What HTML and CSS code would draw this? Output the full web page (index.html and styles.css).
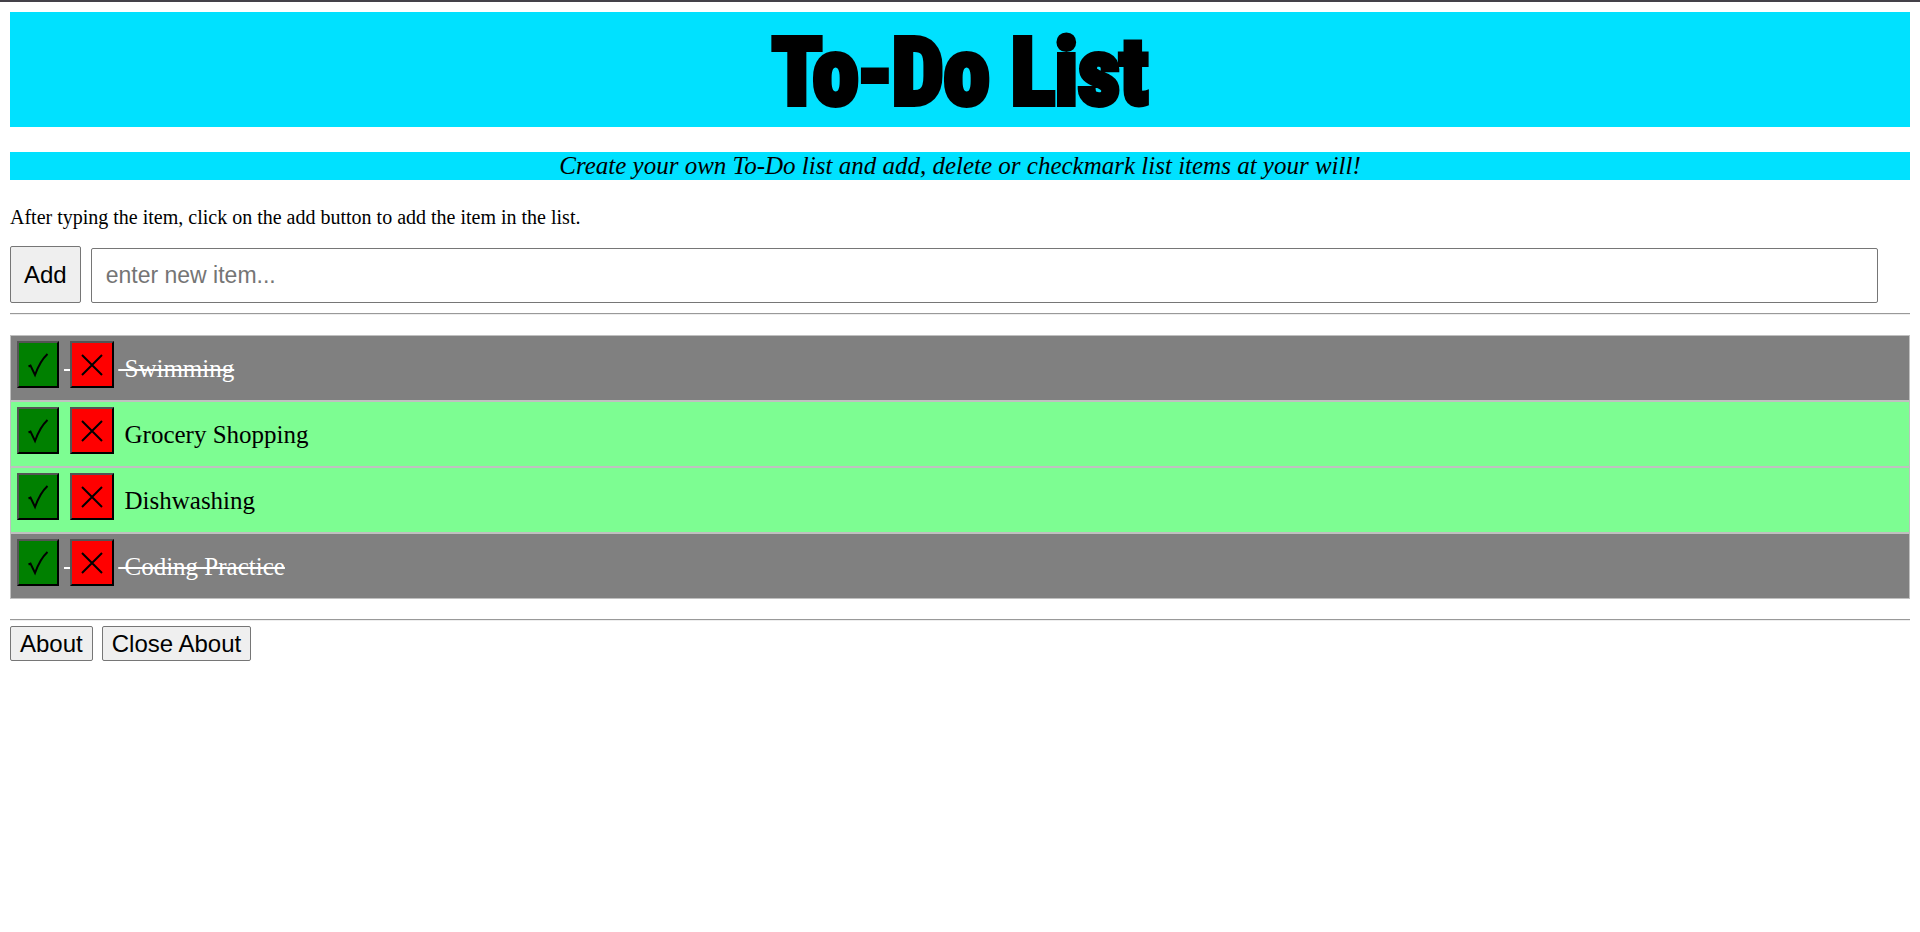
FILE: index.html
```html
<!DOCTYPE html>
<html lang="en">
<head>
<meta charset="utf-8">
<title>To-Do List</title>
<link rel="stylesheet" href="styles.css">
</head>
<body>
<header>
<h1 class="title">To-Do List</h1>
<p class="tagline">Create your own To-Do list and add, delete or checkmark list items at your will!</p>
</header>
<main>
<p class="hint"><label for="item">After typing the item, click on the add button to add the item in the list.</label></p>
<form class="entry">
<button class="add" type="button">Add</button>
<input class="field" id="item" type="text" placeholder="enter new item...">
</form>
<hr class="rule">
<ul class="list">
<li class="item done"><button class="mark check" type="button" aria-label="Check"><svg width="22" height="26" viewBox="0 0 22 26"><path d="M1.500 14.500L3.500 13.500L8 23Q13 9 20.500 2"/></svg></button><span class="gap"> </span><button class="mark remove" type="button" aria-label="Delete"><svg width="22" height="22" viewBox="0 0 22 22"><path d="M1 1L21 21M21 1L1 21"/></svg></button><span class="text"> Swimming</span></li>
<li class="item"><button class="mark check" type="button" aria-label="Check"><svg width="22" height="26" viewBox="0 0 22 26"><path d="M1.500 14.500L3.500 13.500L8 23Q13 9 20.500 2"/></svg></button><span class="gap"> </span><button class="mark remove" type="button" aria-label="Delete"><svg width="22" height="22" viewBox="0 0 22 22"><path d="M1 1L21 21M21 1L1 21"/></svg></button><span class="text"> Grocery Shopping</span></li>
<li class="item"><button class="mark check" type="button" aria-label="Check"><svg width="22" height="26" viewBox="0 0 22 26"><path d="M1.500 14.500L3.500 13.500L8 23Q13 9 20.500 2"/></svg></button><span class="gap"> </span><button class="mark remove" type="button" aria-label="Delete"><svg width="22" height="22" viewBox="0 0 22 22"><path d="M1 1L21 21M21 1L1 21"/></svg></button><span class="text"> Dishwashing</span></li>
<li class="item done"><button class="mark check" type="button" aria-label="Check"><svg width="22" height="26" viewBox="0 0 22 26"><path d="M1.500 14.500L3.500 13.500L8 23Q13 9 20.500 2"/></svg></button><span class="gap"> </span><button class="mark remove" type="button" aria-label="Delete"><svg width="22" height="22" viewBox="0 0 22 22"><path d="M1 1L21 21M21 1L1 21"/></svg></button><span class="text"> Coding Practice</span></li>
</ul>
<hr class="rule">
</main>
<footer class="about">
<button class="small" type="button">About</button>
<button class="small" type="button">Close About</button>
</footer>
</body>
</html>
```
FILE: styles.css
```css
* { box-sizing: border-box; }
body {
  margin: 0;
  padding: 10px;
  border-top: 2px solid #444149;
  background: #fff;
  color: #000;
  font: 20px/23px "Liberation Serif", "Times New Roman", serif;
}
button, input { font-family: "Liberation Sans", Arial, sans-serif; }
.title {
  margin: 0 0 25px;
  padding-top: 6px;
  background: #00e1ff;
  font: bold 92px/109px Impact, "Roboto Condensed", Roboto, sans-serif;
  text-align: center;
  -webkit-text-stroke: 6px #000;
}
.tagline {
  margin: 0 0 25px;
  background: #00e1ff;
  font-size: 25px;
  line-height: 28px;
  font-style: italic;
  text-align: center;
}
.hint { margin: 0 0 17px; padding-top: 1px; }
.entry {
  display: flex;
  align-items: flex-end;
  gap: 10px;
  margin: 0 32px 10px 0;
}
.add, .small {
  border: 1px solid #767676;
  border-radius: 2px;
  background: #efefef;
  color: #000;
  font-size: 24px;
}
.add { height: 57px; padding: 0 13px; }
.field {
  flex: 1;
  min-width: 0;
  height: 55px;
  padding: 0 14px;
  border: 1px solid #767676;
  border-radius: 2px;
  background: #fff;
  font-size: 23px;
}
.field::placeholder { color: #757575; }
.rule {
  height: 2px;
  margin: 0;
  border: 0;
  border-top: 1px solid #999;
  border-bottom: 1px solid #eee;
}
.list {
  margin: 20px 0;
  padding: 0;
  list-style: none;
  font-size: 25px;
}
.item {
  display: flex;
  height: 66px;
  padding: 5px 6px;
  border: 1px solid #c0c0c0;
  background: #7dfd92;
  line-height: 56px;
  white-space: pre;
}
.done { background: #808080; color: #fff; }
.done .gap, .done .text { text-decoration: line-through; text-decoration-thickness: 2px; }
.mark {
  display: flex;
  align-items: center;
  justify-content: center;
  height: 47px;
  padding: 0;
  border: 2px outset #000;
}
.mark svg { flex: none; }
.check { width: 42px; margin-right: 5px; background: #008000; }
.remove { width: 44px; margin-right: 4px; background: #f00; }
.mark path { fill: none; stroke: #000; stroke-width: 2; }
.about { display: flex; gap: 9px; margin-top: 5px; }
.small { height: 35px; padding: 0 9px; }
```
